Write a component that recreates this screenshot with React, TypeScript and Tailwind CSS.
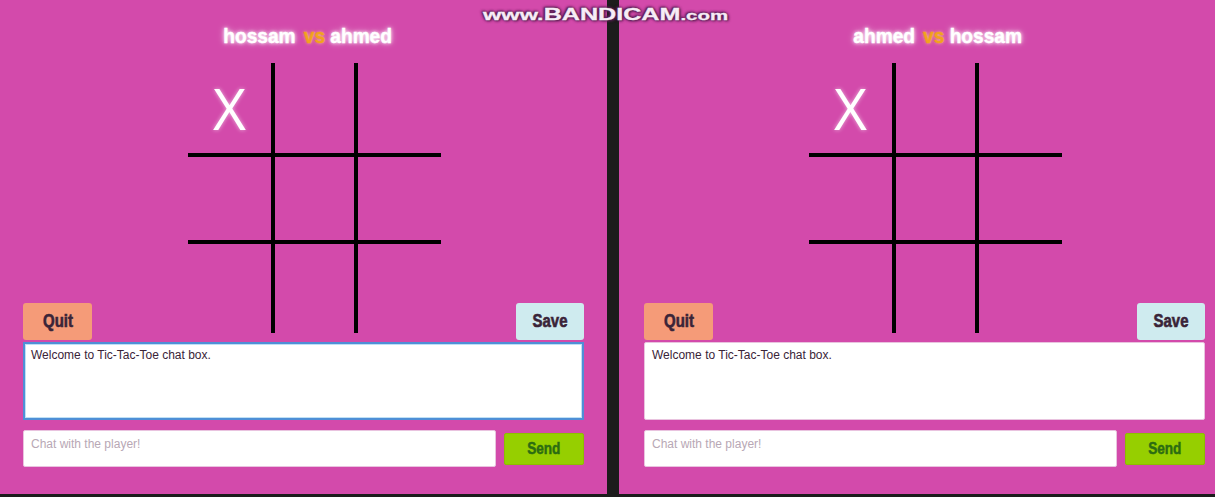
import React from "react";

const heavy = {
  fontFamily: '"Liberation Sans", Arial, sans-serif',
};

function Board() {
  return (
    <div className="ml-[96px] mb-[7px] grid grid-cols-[87px_83px_83px] grid-rows-[94px_87px_89px] w-[253px] h-[270px]">
      <div className="border-r-4 border-b-4 border-black flex items-center justify-center">
        <span
          className="text-white text-[57px] leading-none font-normal [text-shadow:0_0_4px_rgba(255,255,255,0.6)]"
          style={{ fontFamily: '"Open Sans", "Noto Sans", sans-serif' }}
        >
          X
        </span>
      </div>
      <div className="border-r-4 border-b-4 border-black" />
      <div className="border-b-4 border-black" />
      <div className="border-r-4 border-b-4 border-black" />
      <div className="border-r-4 border-b-4 border-black" />
      <div className="border-b-4 border-black" />
      <div className="border-r-4 border-black" />
      <div className="border-r-4 border-black" />
      <div />
    </div>
  );
}

function Panel({
  p1,
  p2,
  focused,
  titleClass,
}: {
  p1: string;
  p2: string;
  focused: boolean;
  titleClass: string;
}) {
  return (
    <div className="w-[607px] h-[494px] shrink-0 bg-[#d34aab] flex flex-col px-[23px]">
      <div className={"h-[63px] pt-[24px] flex justify-center " + titleClass}>
        <div
          className="inline-block scale-x-[0.91] text-[21px] leading-[24px] font-bold text-white [-webkit-text-stroke:0.4px_#fff] [text-shadow:0_0_4px_#fff,0_0_8px_rgba(255,255,255,0.7)] whitespace-pre"
          style={heavy}
        >
          <span>{p1}</span>
          <span className="ml-[9px] text-[#f2a21e] [-webkit-text-stroke:0.4px_#f2a21e] [text-shadow:0_0_4px_rgba(255,220,120,0.9)]">vs</span>
          <span>{" " + p2}</span>
        </div>
      </div>
      <div className="flex items-end">
        <div className="w-[69px] h-[37px] rounded-[3px] bg-[#f59b78] flex items-center justify-center">
          <span className="inline-block scale-x-[0.83] text-[18px] font-bold text-[#3a2438] [-webkit-text-stroke:0.6px_#3a2438]" style={heavy}>
            Quit
          </span>
        </div>
        <Board />
        <div className="flex-1" />
        <div className="w-[68px] h-[37px] rounded-[3px] bg-[#cfebef] flex items-center justify-center">
          <span className="inline-block scale-x-[0.83] text-[18px] font-bold text-[#3a2438] [-webkit-text-stroke:0.6px_#3a2438]" style={heavy}>
            Save
          </span>
        </div>
      </div>
      <div
        className={
          focused
            ? "mt-[2px] h-[78px] bg-white border-2 border-[#4f8fd6] shadow-[inset_0_0_0_1px_#bfe0f5] px-[6px] pt-[3px] text-[12px] leading-[16px] text-[#3a2438]"
            : "mt-[2px] h-[78px] bg-white border border-[#e9c3df] rounded-[2px] px-[7px] pt-[4px] text-[12px] leading-[16px] text-[#3a2438]"
        }
        style={{ fontFamily: '"Liberation Sans", Arial, sans-serif' }}
      >
        Welcome to Tic-Tac-Toe chat box.
      </div>
      <div className="mt-[10px] flex items-center gap-[8px]">
        <div
          className="w-[473px] h-[37px] bg-white border border-[#e9c3df] rounded-[2px] px-[7px] pt-[5px] text-[12px] leading-[16px] text-[#b8a8b5]"
          style={{ fontFamily: '"Liberation Sans", Arial, sans-serif' }}
        >
          Chat with the player!
        </div>
        <div className="w-[80px] h-[32px] rounded-[2px] bg-[#96cf00] border border-[#8cbf00] flex items-center justify-center">
          <span className="inline-block scale-x-[0.8] text-[17px] font-bold text-[#2c6c12] [-webkit-text-stroke:0.5px_#2c6c12]" style={heavy}>
            Send
          </span>
        </div>
      </div>
    </div>
  );
}

export default function App() {
  return (
    <div className="relative w-[1215px] h-[497px] bg-[#1c1c1c] overflow-hidden">
      <div className="flex gap-[12px]">
        <Panel p1="hossam" p2="ahmed" focused={true} titleClass="pl-[8px]" />
        <div className="w-[596px] h-[494px] shrink-0 bg-[#d34aab] overflow-hidden pl-[2px]">
          <Panel p1="ahmed" p2="hossam" focused={false} titleClass="pl-[26px]" />
        </div>
      </div>
      <div
        className="absolute left-[483px] top-[3px] origin-left scale-x-[1.57] whitespace-pre font-bold text-[#f7ecf6] [-webkit-text-stroke:0.3px_#f7ecf6] [text-shadow:0_0_1px_#5a1f55,0_0_2px_#5a1f55,0_0_3px_#5a1f55,1px_1px_2px_#5a1f55,-1px_-1px_2px_#5a1f55]"
        style={{ fontFamily: '"Liberation Sans", Arial, sans-serif' }}
      >
        <span className="text-[15px]">www.</span>
        <span className="text-[16px]">BANDICAM</span>
        <span className="text-[13px]">.com</span>
      </div>
    </div>
  );
}
